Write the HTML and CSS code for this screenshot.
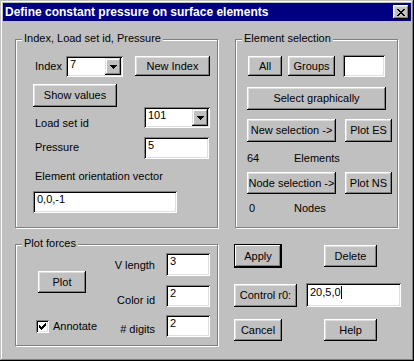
FILE: index.html
```html
<!DOCTYPE html>
<html lang="en">

<head>
    <meta charset="UTF-8">
    <meta name="viewport" content="width=device-width, initial-scale=1.0">
    <title>Define constant pressure on surface elements</title>
    <link rel="stylesheet" href="styles.css">
</head>

<body>
    <div class="dialog">
        <div class="titlebar">
            <span class="title">Define constant pressure on surface elements</span>
            <button class="close">
                <svg width="8" height="7" viewBox="0 0 8 7" shape-rendering="crispEdges">
                    <path d="M0 0h2v1H0z M6 0h2v1H6z M1 1h2v1H1z M5 1h2v1H5z M2 2h4v1H2z M3 3h2v1H3z M2 4h4v1H2z M1 5h2v1H1z M5 5h2v1H5z M0 6h2v1H0z M6 6h2v1H6z" fill="#000" />
                </svg>
            </button>
        </div>

        <div class="content">
            <!-- load set group -->
            <div class="group g-load">
                <span class="legend">Index, Load set id, Pressure</span>
                <div class="row r-index">
                    <span class="lbl w-index">Index</span>
                    <div class="combo c-index">
                        <span class="val">7</span>
                        <span class="arrow">
                            <svg width="7" height="4" viewBox="0 0 7 4" shape-rendering="crispEdges">
                                <path d="M0 0h7v1H0z M1 1h5v1H1z M2 2h3v1H2z M3 3h1v1H3z" fill="#000" />
                            </svg>
                        </span>
                    </div>
                    <button class="btn b-newindex">New Index</button>
                </div>
                <div class="row r-show">
                    <button class="btn b-show">Show values</button>
                </div>
                <div class="row r-loadset">
                    <span class="lbl w-field l-loadset">Load set id</span>
                    <div class="combo c-loadset">
                        <span class="val">101</span>
                        <span class="arrow">
                            <svg width="7" height="4" viewBox="0 0 7 4" shape-rendering="crispEdges">
                                <path d="M0 0h7v1H0z M1 1h5v1H1z M2 2h3v1H2z M3 3h1v1H3z" fill="#000" />
                            </svg>
                        </span>
                    </div>
                </div>
                <div class="row r-pressure">
                    <span class="lbl w-field l-pressure">Pressure</span>
                    <div class="input i-pressure">5</div>
                </div>
                <div class="row r-vlabel">
                    <span class="lbl">Element orientation vector</span>
                </div>
                <div class="row r-vector">
                    <div class="input i-vector">0,0,-1</div>
                </div>
            </div>

            <!-- element selection group -->
            <div class="group g-sel">
                <span class="legend">Element selection</span>
                <div class="row r-all">
                    <button class="btn b-all">All</button>
                    <button class="btn b-groups">Groups</button>
                    <div class="input i-groups"></div>
                </div>
                <div class="row r-graph">
                    <button class="btn b-graph">Select graphically</button>
                </div>
                <div class="row r-newsel">
                    <button class="btn b-sel">New selection -&gt;</button>
                    <button class="btn b-plot">Plot ES</button>
                </div>
                <div class="row r-count r-elems">
                    <span class="num">64</span>
                    <span>Elements</span>
                </div>
                <div class="row r-nodesel">
                    <button class="btn b-sel">Node selection -&gt;</button>
                    <button class="btn b-plot">Plot NS</button>
                </div>
                <div class="row r-count r-nodes">
                    <span class="num n-zero">0</span>
                    <span>Nodes</span>
                </div>
            </div>

            <!-- plot forces group -->
            <div class="group g-plot">
                <span class="legend">Plot forces</span>
                <div class="plotgrid">
                    <button class="btn b-plotf">Plot</button>
                    <span class="flbl fl-1">V length</span>
                    <div class="input fin fin-1">3</div>
                    <span class="flbl fl-2">Color id</span>
                    <div class="input fin fin-2">2</div>
                    <label class="check">
                        <span class="box">
                            <svg width="7" height="7" viewBox="0 0 7 7" shape-rendering="crispEdges">
                                <path d="M6 0h1v1H6z M5 1h2v1H5z M0 2h1v1H0z M4 2h3v1H4z M0 3h2v1H0z M3 3h3v1H3z M0 4h5v1H0z M1 5h3v1H1z M2 6h1v1H2z" fill="#000" />
                            </svg>
                        </span>
                        <span>Annotate</span>
                    </label>
                    <span class="flbl fl-3"># digits</span>
                    <div class="input fin fin-3">2</div>
                </div>
            </div>

            <!-- dialog buttons -->
            <div class="actions">
                <div class="arow a-1">
                    <button class="btn btn-default b-apply">Apply</button>
                    <button class="btn b-right">Delete</button>
                </div>
                <div class="arow a-2">
                    <button class="btn b-control">Control r0:</button>
                    <div class="input i-control">20,5,0<span class="caret"></span></div>
                </div>
                <div class="arow a-3">
                    <button class="btn b-cancel">Cancel</button>
                    <button class="btn b-right">Help</button>
                </div>
            </div>
        </div>
    </div>
</body>

</html>
```

FILE: styles.css
```css
* {
    box-sizing: border-box;
}

body {
    margin: 0;
    background: #c0c0c0;
    color: #000;
    font-family: "Liberation Sans", Arial, sans-serif;
    font-size: 11px;
    line-height: 13px;
}

.dialog {
    width: 414px;
    height: 361px;
    padding: 3px;
    background: #c0c0c0;
    box-shadow: inset -1px -1px #000, inset 1px 1px #c0c0c0, inset -2px -2px #808080, inset 2px 2px #fff;
}

.titlebar {
    height: 18px;
    background: #000080;
    display: flex;
    align-items: center;
    justify-content: space-between;
    padding-left: 2px;
}

.title {
    color: #fff;
    font-size: 12px;
    font-weight: bold;
    white-space: nowrap;
}

.close {
    width: 16px;
    height: 14px;
    margin-right: 2px;
    padding: 0;
    border: none;
    background: #c0c0c0;
    display: flex;
    align-items: center;
    justify-content: center;
    box-shadow: inset -1px -1px #000, inset 1px 1px #fff, inset -2px -2px #808080, inset 2px 2px #dfdfdf;
}

.close svg {
    margin-top: 1px;
}

.content {
    padding: 18px 0 0 12px;
    display: grid;
    grid-template-columns: 204px 168px;
    grid-template-rows: 190px 103px;
    column-gap: 15px;
    row-gap: 15px;
}

/* etched group box */
.group {
    border: 1px solid #808080;
    box-shadow: inset 1px 1px #fff, 1px 1px #fff;
    display: flex;
    flex-direction: column;
}

.legend {
    display: block;
    align-self: flex-start;
    height: 13px;
    margin: -8px 0 0 6px;
    padding: 0 2px;
    background: #c0c0c0;
    white-space: nowrap;
}

.g-load {
    width: 203px;
    height: 189px;
}

.g-sel {
    width: 163px;
    height: 189px;
    margin-left: 1px;
}

.g-plot {
    width: 203px;
    height: 102px;
}

.row {
    display: flex;
    flex-shrink: 0;
}

.lbl {
    white-space: nowrap;
}

/* controls */
.btn {
    font: inherit;
    color: #000;
    background: #c0c0c0;
    border: none;
    padding: 0;
    white-space: nowrap;
    flex-shrink: 0;
    box-shadow: inset -1px -1px #000, inset 1px 1px #fff, inset -2px -2px #808080, inset 2px 2px #dfdfdf;
}

.btn-default {
    border: 1px solid #000;
    box-shadow: inset -1px -1px #000, inset 1px 1px #fff, inset -2px -2px #808080;
}

.input {
    background: #fff;
    padding: 2px 4px;
    white-space: nowrap;
    flex-shrink: 0;
    box-shadow: inset 1px 1px #808080, inset -1px -1px #fff, inset 2px 2px #000, inset -2px -2px #dfdfdf;
}

.combo {
    display: flex;
    height: 21px;
    padding: 2px;
    background: #fff;
    flex-shrink: 0;
    box-shadow: inset 1px 1px #808080, inset -1px -1px #fff, inset 2px 2px #000, inset -2px -2px #dfdfdf;
}

.combo .val {
    flex: 1;
    padding-left: 2px;
}

.combo .arrow {
    width: 16px;
    background: #c0c0c0;
    display: flex;
    align-items: center;
    justify-content: center;
    box-shadow: inset -1px -1px #000, inset 1px 1px #dfdfdf, inset -2px -2px #808080, inset 2px 2px #fff;
}

/* load set group */
.r-index {
    margin-top: 11px;
    height: 21px;
    padding-left: 19px;
    align-items: flex-start;
}

.w-index {
    width: 31px;
    margin-top: 4px;
}

.c-index {
    width: 57px;
}

.b-newindex {
    width: 75px;
    height: 20px;
    margin-left: 12px;
}

.r-show {
    margin-top: 7px;
    padding-left: 17px;
}

.b-show {
    width: 84px;
    height: 23px;
}

.w-field {
    width: 109px;
}

.r-loadset {
    height: 30px;
    padding-left: 19px;
    align-items: flex-start;
}

.l-loadset {
    margin-top: 10px;
}

.c-loadset {
    width: 66px;
}

.r-pressure {
    height: 22px;
    padding-left: 19px;
    align-items: flex-start;
}

.l-pressure {
    margin-top: 4px;
}

.i-pressure {
    width: 65px;
    height: 22px;
}

.r-vlabel {
    margin-top: 11px;
    padding-left: 19px;
}

.r-vector {
    margin-top: 8px;
    padding-left: 17px;
}

.i-vector {
    width: 144px;
    height: 22px;
}

/* element selection group */
.r-all {
    margin-top: 10px;
    height: 22px;
    align-items: center;
    padding-left: 12px;
}

.b-all {
    width: 34px;
    height: 20px;
}

.b-groups {
    width: 47px;
    height: 20px;
    margin-left: 6px;
}

.i-groups {
    width: 42px;
    height: 22px;
    margin-left: 8px;
}

.r-graph {
    margin-top: 10px;
    padding-left: 11px;
}

.b-graph {
    width: 139px;
    height: 23px;
}

.r-newsel {
    margin-top: 9px;
    padding-left: 11px;
}

.r-nodesel {
    margin-top: 7px;
    padding-left: 11px;
}

.b-sel {
    width: 89px;
    height: 23px;
}

.r-nodesel .btn {
    height: 22px;
}

.b-plot {
    width: 47px;
    height: 23px;
    margin-left: 9px;
}

.r-count {
    padding-left: 11px;
}

.r-elems {
    margin-top: 10px;
}

.r-nodes {
    margin-top: 8px;
}

.num {
    width: 47px;
}

.n-zero {
    padding-left: 2px;
}

/* plot forces group */
.plotgrid {
    margin-top: 3px;
    display: grid;
    grid-template-columns: 83px 45px 44px;
    grid-template-rows: 24px 22px 22px;
    column-gap: 11px;
    row-gap: 8px;
}

.b-plotf {
    grid-column: 1;
    grid-row: 1 / span 2;
    align-self: start;
    justify-self: start;
    width: 48px;
    height: 22px;
    margin: 18px 0 0 22px;
}

.flbl {
    grid-column: 2;
    text-align: right;
    white-space: nowrap;
}

.fl-1 {
    grid-row: 1;
    align-self: center;
}

.fl-2 {
    grid-row: 2;
    align-self: end;
}

.fl-3 {
    grid-row: 3;
    align-self: end;
    margin-bottom: 1px;
}

.fin {
    grid-column: 3;
    height: 22px;
}

.fin-1 {
    grid-row: 1;
    height: 23px;
}

.fin-2 {
    grid-row: 2;
}

.fin-3 {
    grid-row: 3;
}

.check {
    grid-column: 1;
    grid-row: 3;
    align-self: center;
    display: flex;
    align-items: center;
    margin-left: 20px;
}

.check .box {
    width: 13px;
    height: 13px;
    margin-right: 4px;
    background: #fff;
    display: flex;
    align-items: center;
    justify-content: center;
    box-shadow: inset 1px 1px #808080, inset -1px -1px #fff, inset 2px 2px #000, inset -2px -2px #dfdfdf;
}

/* dialog buttons */
.actions {
    display: flex;
    flex-direction: column;
}

.arow {
    display: flex;
    align-items: center;
}

.a-1 {
    height: 24px;
}

.a-2 {
    height: 24px;
    margin-top: 15px;
}

.a-3 {
    height: 22px;
    margin-top: 12px;
}

.b-apply {
    width: 48px;
    height: 24px;
}

.b-cancel {
    width: 48px;
    height: 22px;
}

.b-right {
    width: 53px;
    height: 22px;
    margin-left: 42px;
}

.b-control {
    width: 63px;
    height: 23px;
}

.i-control {
    width: 95px;
    height: 24px;
    margin-left: 9px;
    padding-top: 3px;
}

.caret {
    display: inline-block;
    width: 1px;
    height: 13px;
    background: #000;
    vertical-align: top;
}
```
